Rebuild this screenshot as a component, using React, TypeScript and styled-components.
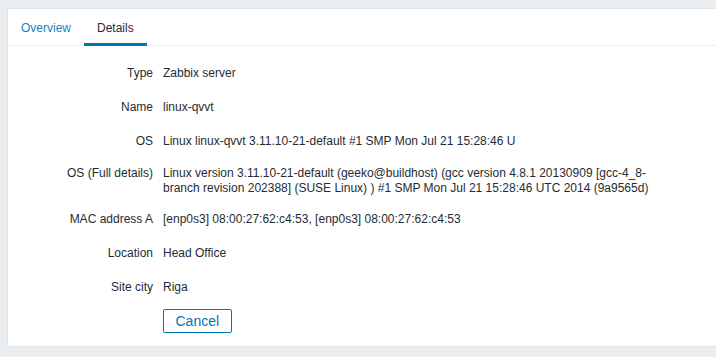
import React from 'react';
import styled, { createGlobalStyle } from 'styled-components';

const GlobalStyle = createGlobalStyle`
  html, body {
    margin: 0;
    padding: 0;
    background: #ebeef0;
    overflow: hidden;
  }
  body {
    padding: 8px 0 0 8px;
    font-family: "Liberation Sans", Arial, sans-serif;
    font-size: 12px;
    color: #1f2c33;
  }
`;

const Panel = styled.div`
  background: #ffffff;
  border: 1px solid #dfe4e7;
  border-right: none;
  margin-left: -1px;
  width: 740px;
  padding-bottom: 8px;
`;

const TabBar = styled.ul`
  display: flex;
  list-style: none;
  margin: 0;
  padding: 0;
  height: 36px;
  border-bottom: 1px solid #ebeef0;
`;

const Tab = styled.li<{ $active?: boolean }>`
  box-sizing: border-box;
  height: 37px;
  padding: 12px 13px 0;
  line-height: 14px;
  color: ${p => (p.$active ? '#1f2c33' : '#1b82c6')};
  border-bottom: 3px solid ${p => (p.$active ? '#0275b8' : 'transparent')};
  cursor: pointer;
`;

const Form = styled.div`
  padding-top: 11px;
`;

const Row = styled.div<{ $actions?: boolean }>`
  display: grid;
  grid-template-columns: 145px 500px;
  column-gap: 10px;
  align-items: start;
  padding: ${p => (p.$actions ? '4px 0 5px' : '5px 0')};
`;

const Cell = styled.div<{ $tight?: boolean }>`
  box-sizing: border-box;
  min-height: 24px;
  padding: ${p => (p.$tight ? '2px 0' : '4px 0')};
  line-height: 15px;
`;

const Label = styled(Cell)`
  text-align: right;
`;

const Value = styled(Cell)`
  word-wrap: break-word;
`;

const Button = styled.button`
  box-sizing: border-box;
  height: 24px;
  padding: 0 11.5px;
  border: 1px solid #0275b8;
  border-radius: 2px;
  background: #ffffff;
  color: #0275b8;
  font-family: "Liberation Sans", Arial, sans-serif;
  font-size: 14px;
  line-height: 22px;
  cursor: pointer;
`;

const fields: { label: string; value: string }[] = [
  { label: 'Type', value: 'Zabbix server' },
  { label: 'Name', value: 'linux-qvvt' },
  { label: 'OS', value: 'Linux linux-qvvt 3.11.10-21-default #1 SMP Mon Jul 21 15:28:46 U' },
  {
    label: 'OS (Full details)',
    value:
      'Linux version 3.11.10-21-default (geeko@buildhost) (gcc version 4.8.1 20130909 [gcc-4_8-branch revision 202388] (SUSE Linux) ) #1 SMP Mon Jul 21 15:28:46 UTC 2014 (9a9565d)',
  },
  { label: 'MAC address A', value: '[enp0s3] 08:00:27:62:c4:53, [enp0s3] 08:00:27:62:c4:53' },
  { label: 'Location', value: 'Head Office' },
  { label: 'Site city', value: 'Riga' },
];

const App: React.FC = () => {
  return (
    <>
      <GlobalStyle />
      <Panel>
        <TabBar>
          <Tab>Overview</Tab>
          <Tab $active>Details</Tab>
        </TabBar>
        <Form>
          {fields.map(f => {
            const tight = f.value.length > 90;
            return (
              <Row key={f.label}>
                <Label $tight={tight}>{f.label}</Label>
                <Value $tight={tight}>{f.value}</Value>
              </Row>
            );
          })}
          <Row $actions>
            <div />
            <div>
              <Button>Cancel</Button>
            </div>
          </Row>
        </Form>
      </Panel>
    </>
  );
};

export default App;
